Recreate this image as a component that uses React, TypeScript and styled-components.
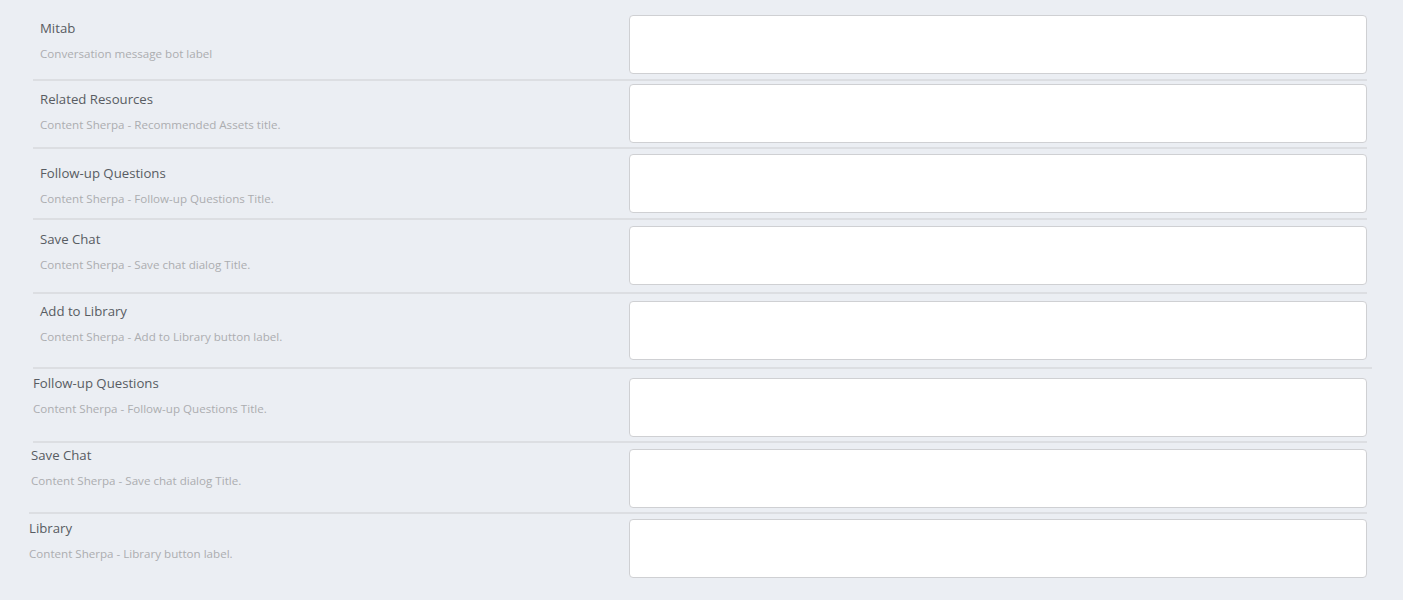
import styled, { createGlobalStyle } from "styled-components";

const GlobalStyle = createGlobalStyle`
    html, body {
        margin: 0;
        padding: 0;
        background: #ebeef3;
        font-family: "Open Sans", "Noto Sans", sans-serif;
    }
`;

interface Setting {
    title: string;
    help: string;
    height: number;
    boxTop: number;
    titleY: number;
    indent: number;
    lineFrom: number;
    lineTo: number;
}

const settings: Setting[] = [
    { title: "Mitab", help: "Conversation message bot label", height: 79, boxTop: 15, titleY: 28, indent: 40, lineFrom: 33, lineTo: 1367 },
    { title: "Related Resources", help: "Content Sherpa - Recommended Assets title.", height: 66, boxTop: 3, titleY: 18, indent: 40, lineFrom: 33, lineTo: 1367 },
    { title: "Follow-up Questions", help: "Content Sherpa - Follow-up Questions Title.", height: 69, boxTop: 5, titleY: 24, indent: 40, lineFrom: 33, lineTo: 1367 },
    { title: "Save Chat", help: "Content Sherpa - Save chat dialog Title.", height: 72, boxTop: 6, titleY: 19, indent: 40, lineFrom: 33, lineTo: 1367 },
    { title: "Add to Library", help: "Content Sherpa - Add to Library button label.", height: 73, boxTop: 7, titleY: 17, indent: 40, lineFrom: 33, lineTo: 1372 },
    { title: "Follow-up Questions", help: "Content Sherpa - Follow-up Questions Title.", height: 72, boxTop: 9, titleY: 14, indent: 33, lineFrom: 33, lineTo: 1367 },
    { title: "Save Chat", help: "Content Sherpa - Save chat dialog Title.", height: 69, boxTop: 6, titleY: 12, indent: 31, lineFrom: 29, lineTo: 1367 },
    { title: "Library", help: "Content Sherpa - Library button label.", height: 86, boxTop: 5, titleY: 14, indent: 29, lineFrom: 0, lineTo: 0 },
];

const List = styled.div`
    display: flex;
    flex-direction: column;
    width: 1403px;
`;

const Row = styled.div<{ $height: number }>`
    display: flex;
    align-items: flex-start;
    height: ${(p) => p.$height}px;
`;

const Label = styled.div<{ $indent: number; $top: number }>`
    width: ${(p) => 629 - p.$indent}px;
    padding-left: ${(p) => p.$indent}px;
    padding-top: ${(p) => p.$top - 10}px;
    display: flex;
    flex-direction: column;
    gap: 5px;
`;

const Title = styled.div`
    font-size: 13.2px;
    line-height: 20px;
    color: #585c62;
`;

const Help = styled.div`
    font-size: 11.6px;
    line-height: 21px;
    color: #abadb0;
`;

const Field = styled.textarea<{ $top: number }>`
    box-sizing: border-box;
    margin: ${(p) => p.$top}px 0 0 0;
    width: 738px;
    height: 59px;
    border: 1px solid #cfd0d3;
    border-radius: 4px;
    background: #ffffff;
    resize: none;
    font: inherit;
    outline: none;
`;

const Divider = styled.div<{ $from: number; $to: number }>`
    height: 2px;
    margin-left: ${(p) => p.$from}px;
    width: ${(p) => p.$to - p.$from}px;
    background: #dcdee2;
`;

const App = () => {
    return (
        <>
            <GlobalStyle />
            <List>
                {settings.map((s, i) => (
                    <div key={i}>
                        <Row $height={s.height}>
                            <Label $indent={s.indent} $top={s.titleY}>
                                <Title>{s.title}</Title>
                                <Help>{s.help}</Help>
                            </Label>
                            <Field $top={s.boxTop} />
                        </Row>
                        {s.lineTo > 0 && <Divider $from={s.lineFrom} $to={s.lineTo} />}
                    </div>
                ))}
            </List>
        </>
    );
};

export default App;
